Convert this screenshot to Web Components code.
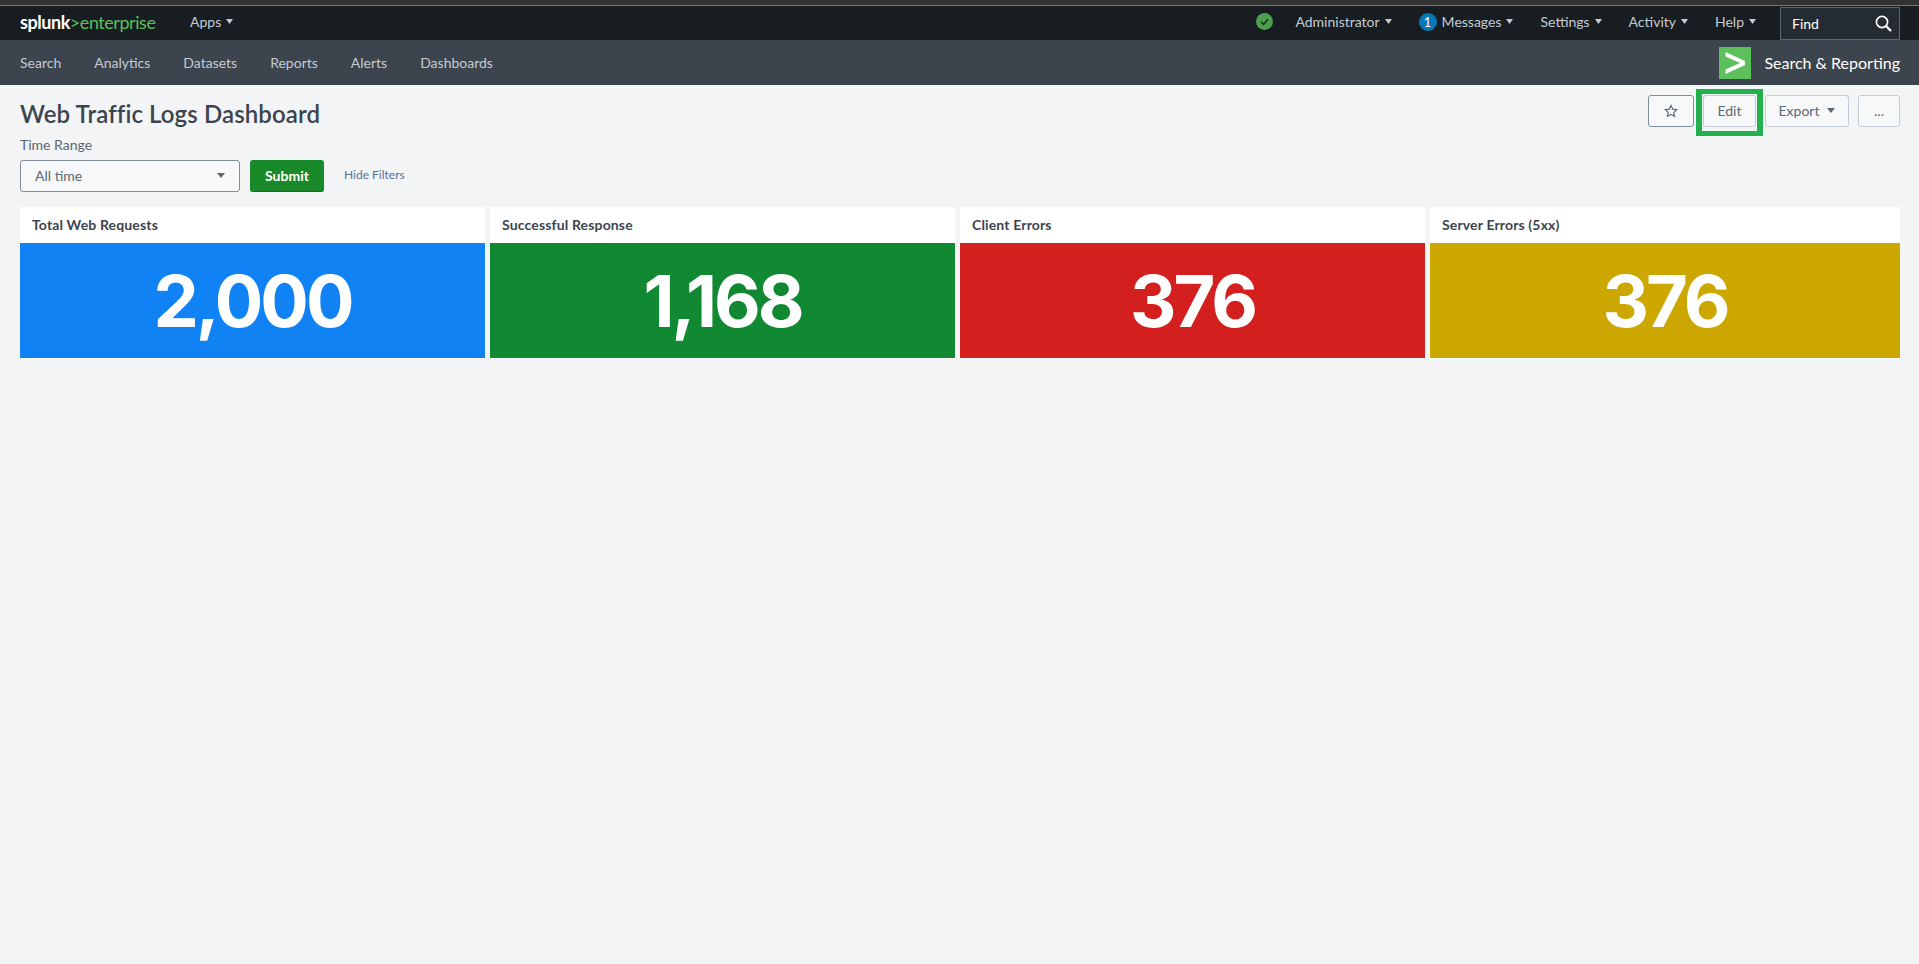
<!DOCTYPE html>
<html lang="en">
<head>
<meta charset="utf-8">
<title>Web Traffic Logs Dashboard</title>
<style>
html, body { margin: 0; padding: 0; height: 100%; }
body { background: #f2f4f5; font-family: "Lato", "Liberation Sans", sans-serif; overflow: hidden; }
</style>
</head>
<body>
<spl-topbar>
	<spl-menu-item slot="left">Apps</spl-menu-item>
	<spl-menu-item>Administrator</spl-menu-item>
	<spl-menu-item badge="1">Messages</spl-menu-item>
	<spl-menu-item>Settings</spl-menu-item>
	<spl-menu-item>Activity</spl-menu-item>
	<spl-menu-item>Help</spl-menu-item>
</spl-topbar>
<spl-appbar title="Search &amp; Reporting">
	<a>Search</a>
	<a>Analytics</a>
	<a>Datasets</a>
	<a>Reports</a>
	<a>Alerts</a>
	<a>Dashboards</a>
</spl-appbar>
<spl-dashboard-head heading="Web Traffic Logs Dashboard"></spl-dashboard-head>
<spl-panel-row>
	<spl-single-value label="Total Web Requests" value="2,000" color="#1182f3"></spl-single-value>
	<spl-single-value label="Successful Response" value="1,168" color="#118832"></spl-single-value>
	<spl-single-value label="Client Errors" value="376" color="#d41f1f"></spl-single-value>
	<spl-single-value label="Server Errors (5xx)" value="376" color="#cba700"></spl-single-value>
</spl-panel-row>

<script>
const caret = (color, w = 8) => `<svg width="${w}" height="5" viewBox="0 0 8 5" preserveAspectRatio="none"><path d="M0 0h8L4 5z" fill="${color}"/></svg>`;

class SplMenuItem extends HTMLElement {
	connectedCallback() {
		const badge = this.getAttribute('badge');
		this.attachShadow({ mode: 'open' });
		this.shadowRoot.innerHTML = `
<style>
:host { display: inline-flex; align-items: center; gap: 5px; color: #c3cbd4; font-size: 14px; line-height: 20px; white-space: nowrap; }
.badge { width: 18px; height: 18px; border-radius: 50%; background: #0877b8; color: #fff; font-size: 13px; display: flex; align-items: center; justify-content: center; }
</style>
${badge ? `<span class="badge">${badge}</span>` : ''}<slot></slot>${caret('#c3cbd4', 7)}`;
	}
}

class SplTopbar extends HTMLElement {
	connectedCallback() {
		this.attachShadow({ mode: 'open' });
		this.shadowRoot.innerHTML = `
<style>
:host { display: block; }
.strip { height: 5px; background: #333; border-bottom: 1px solid #777; }
.bar { height: 34px; box-sizing: border-box; background: #171d21; display: flex; align-items: center; padding: 0 19px 3px 20px; }
.logo { font-size: 18px; line-height: 24px; letter-spacing: -0.45px; color: #5cc05c; width: 170px; }
.logo b { color: #fff; font-weight: 700; }
.right { margin-left: auto; align-self: stretch; display: flex; align-items: center; gap: 27px; }
.ok { width: 17px; height: 17px; margin-right: -5px; display: block; }
.find { width: 120px; height: 33px; box-sizing: border-box; background: #252c31; border: 1px solid #5c6670; display: flex; align-items: center; justify-content: space-between; align-self: flex-end; margin: 0 0 -3px -3px; color: #fff; font-size: 14px; }
.find span { margin-left: 11px; }
.find svg { margin-right: 7px; }
</style>
<div class="strip"></div>
<div class="bar">
	<div class="logo"><b>splunk</b>&gt;enterprise</div>
	<slot name="left"></slot>
	<div class="right">
		<svg class="ok" viewBox="0 0 17 17"><circle cx="8.5" cy="8.500" r="8.5" fill="#4c9f4c"/><path d="M5 8.800l2.500 2.500L12 6.300" fill="none" stroke="#10331a" stroke-width="1.600"/></svg>
		<slot></slot>
		<div class="find"><span>Find</span><svg width="17" height="17" viewBox="0 0 17 17"><circle cx="7" cy="7" r="5.600" fill="none" stroke="#fff" stroke-width="1.700"/><path d="M11 11L16 16" stroke="#fff" stroke-width="2.400"/></svg></div>
	</div>
</div>`;
	}
}

class SplAppbar extends HTMLElement {
	connectedCallback() {
		this.attachShadow({ mode: 'open' });
		this.shadowRoot.innerHTML = `
<style>
:host { display: flex; align-items: center; height: 45px; background: #3c444d; padding: 0 19px 0 20px; color: #c3cbd4; font-size: 14px; }
nav { display: flex; gap: 33px; }
.app { margin-left: auto; display: flex; align-items: center; gap: 13px; color: #fff; font-size: 16px; }
svg { display: block; }
</style>
<nav><slot></slot></nav>
<div class="app">
	<svg width="32" height="32" viewBox="0 0 32 32"><rect width="32" height="32" fill="#5cc05c"/><path d="M6.500 5L26 14v4L6.500 27v-4.500L21 16 6.500 9.500z" fill="#fff"/></svg>
	<span>${this.getAttribute('title')}</span>
</div>`;
	}
}

class SplButton extends HTMLElement {
	connectedCallback() {
		this.attachShadow({ mode: 'open' });
		this.shadowRoot.innerHTML = `
<style>
:host { display: inline-flex; position: relative; align-items: center; justify-content: center; gap: 8px; height: 32px; box-sizing: border-box; padding-bottom: 2px; background: #f7f8fa; border: 1px solid #c3cbd4; border-radius: 3px; color: #5c6773; font-size: 14px; }
:host([dark]) { border-color: #818d99; padding-bottom: 0; }
:host([marked])::after { content: ""; position: absolute; top: -7px; bottom: -10px; left: -8px; right: -8px; border: 5px solid #22b14c; border-width: 5px 6px; }
</style>
<slot></slot>`;
	}
}

class SplDashboardHead extends HTMLElement {
	connectedCallback() {
		this.attachShadow({ mode: 'open' });
		this.shadowRoot.innerHTML = `
<style>
:host { display: flex; justify-content: space-between; padding: 10px 19px 0 20px; height: 113px; box-sizing: border-box; color: #3c444d; }
h1 { margin: 0; padding-top: 4px; font-size: 24px; line-height: 30px; font-weight: 600; letter-spacing: 0.1px; color: #3c444d; }
label { display: block; font-size: 14px; line-height: 18px; margin-top: 7px; color: #5c6773; }
.filters { display: flex; align-items: center; margin-top: 6px; }
.select { width: 220px; height: 32px; box-sizing: border-box; background: #f7f8fa; border: 1px solid #818d99; border-radius: 3px; display: flex; align-items: center; justify-content: space-between; padding: 0 14px 1px 14px; font-size: 14px; color: #5c6773; }
.submit { margin-left: 10px; width: 74px; height: 32px; border-radius: 3px; background: #1a8929; color: #fff; font-size: 14px; font-weight: 700; display: flex; align-items: center; justify-content: center; box-sizing: border-box; border-bottom: 1px solid #15701f; padding-bottom: 1px; }
.hide { margin: 0 0 3px 20px; font-size: 12px; color: #5a7196; }
.actions { display: flex; gap: 9px; }
</style>
<div>
	<h1>${this.getAttribute('heading')}</h1>
	<label>Time Range</label>
	<div class="filters">
		<div class="select"><span>All time</span>${caret('#5c6773')}</div>
		<div class="submit">Submit</div>
		<div class="hide">Hide Filters</div>
	</div>
</div>
<div class="actions">
	<spl-button dark style="width:46px"><svg width="14" height="14" viewBox="0 0 24 24"><path d="M12 2.500l2.900 6.300 6.800.8-5 4.700 1.300 6.800-6-3.400-6 3.400 1.300-6.800-5-4.700 6.800-.8z" fill="none" stroke="#5c6773" stroke-width="2"/></svg></spl-button>
	<spl-button marked style="width:53px">Edit</spl-button>
	<spl-button style="width:84px">Export ${caret('#5c6773')}</spl-button>
	<spl-button style="width:42px">...</spl-button>
</div>`;
	}
}

class SplPanelRow extends HTMLElement {
	connectedCallback() {
		this.attachShadow({ mode: 'open' });
		this.shadowRoot.innerHTML = `
<style>
:host { display: grid; grid-template-columns: 465px 465px 465px 470px; gap: 5px; padding: 9px 19px 0 20px; }
</style>
<slot></slot>`;
	}
}

class SplSingleValue extends HTMLElement {
	connectedCallback() {
		this.attachShadow({ mode: 'open' });
		this.shadowRoot.innerHTML = `
<style>
:host { display: block; background: #fff; }
h2 { margin: 0; height: 36px; padding: 0 12px; font-size: 14px; line-height: 36px; font-weight: 700; letter-spacing: 0.15px; color: #3c444d; }
.value { height: 115px; margin-bottom: 1px; display: flex; align-items: center; justify-content: center; background: ${this.getAttribute('color')}; color: #fff; font-size: 72px; font-weight: 700; font-family: "Inter", "Lato", sans-serif; letter-spacing: -3px; }
</style>
<h2>${this.getAttribute('label')}</h2>
<div class="value">${this.getAttribute('value')}</div>`;
	}
}

customElements.define('spl-menu-item', SplMenuItem);
customElements.define('spl-topbar', SplTopbar);
customElements.define('spl-appbar', SplAppbar);
customElements.define('spl-button', SplButton);
customElements.define('spl-dashboard-head', SplDashboardHead);
customElements.define('spl-panel-row', SplPanelRow);
customElements.define('spl-single-value', SplSingleValue);
</script>
</body>
</html>
